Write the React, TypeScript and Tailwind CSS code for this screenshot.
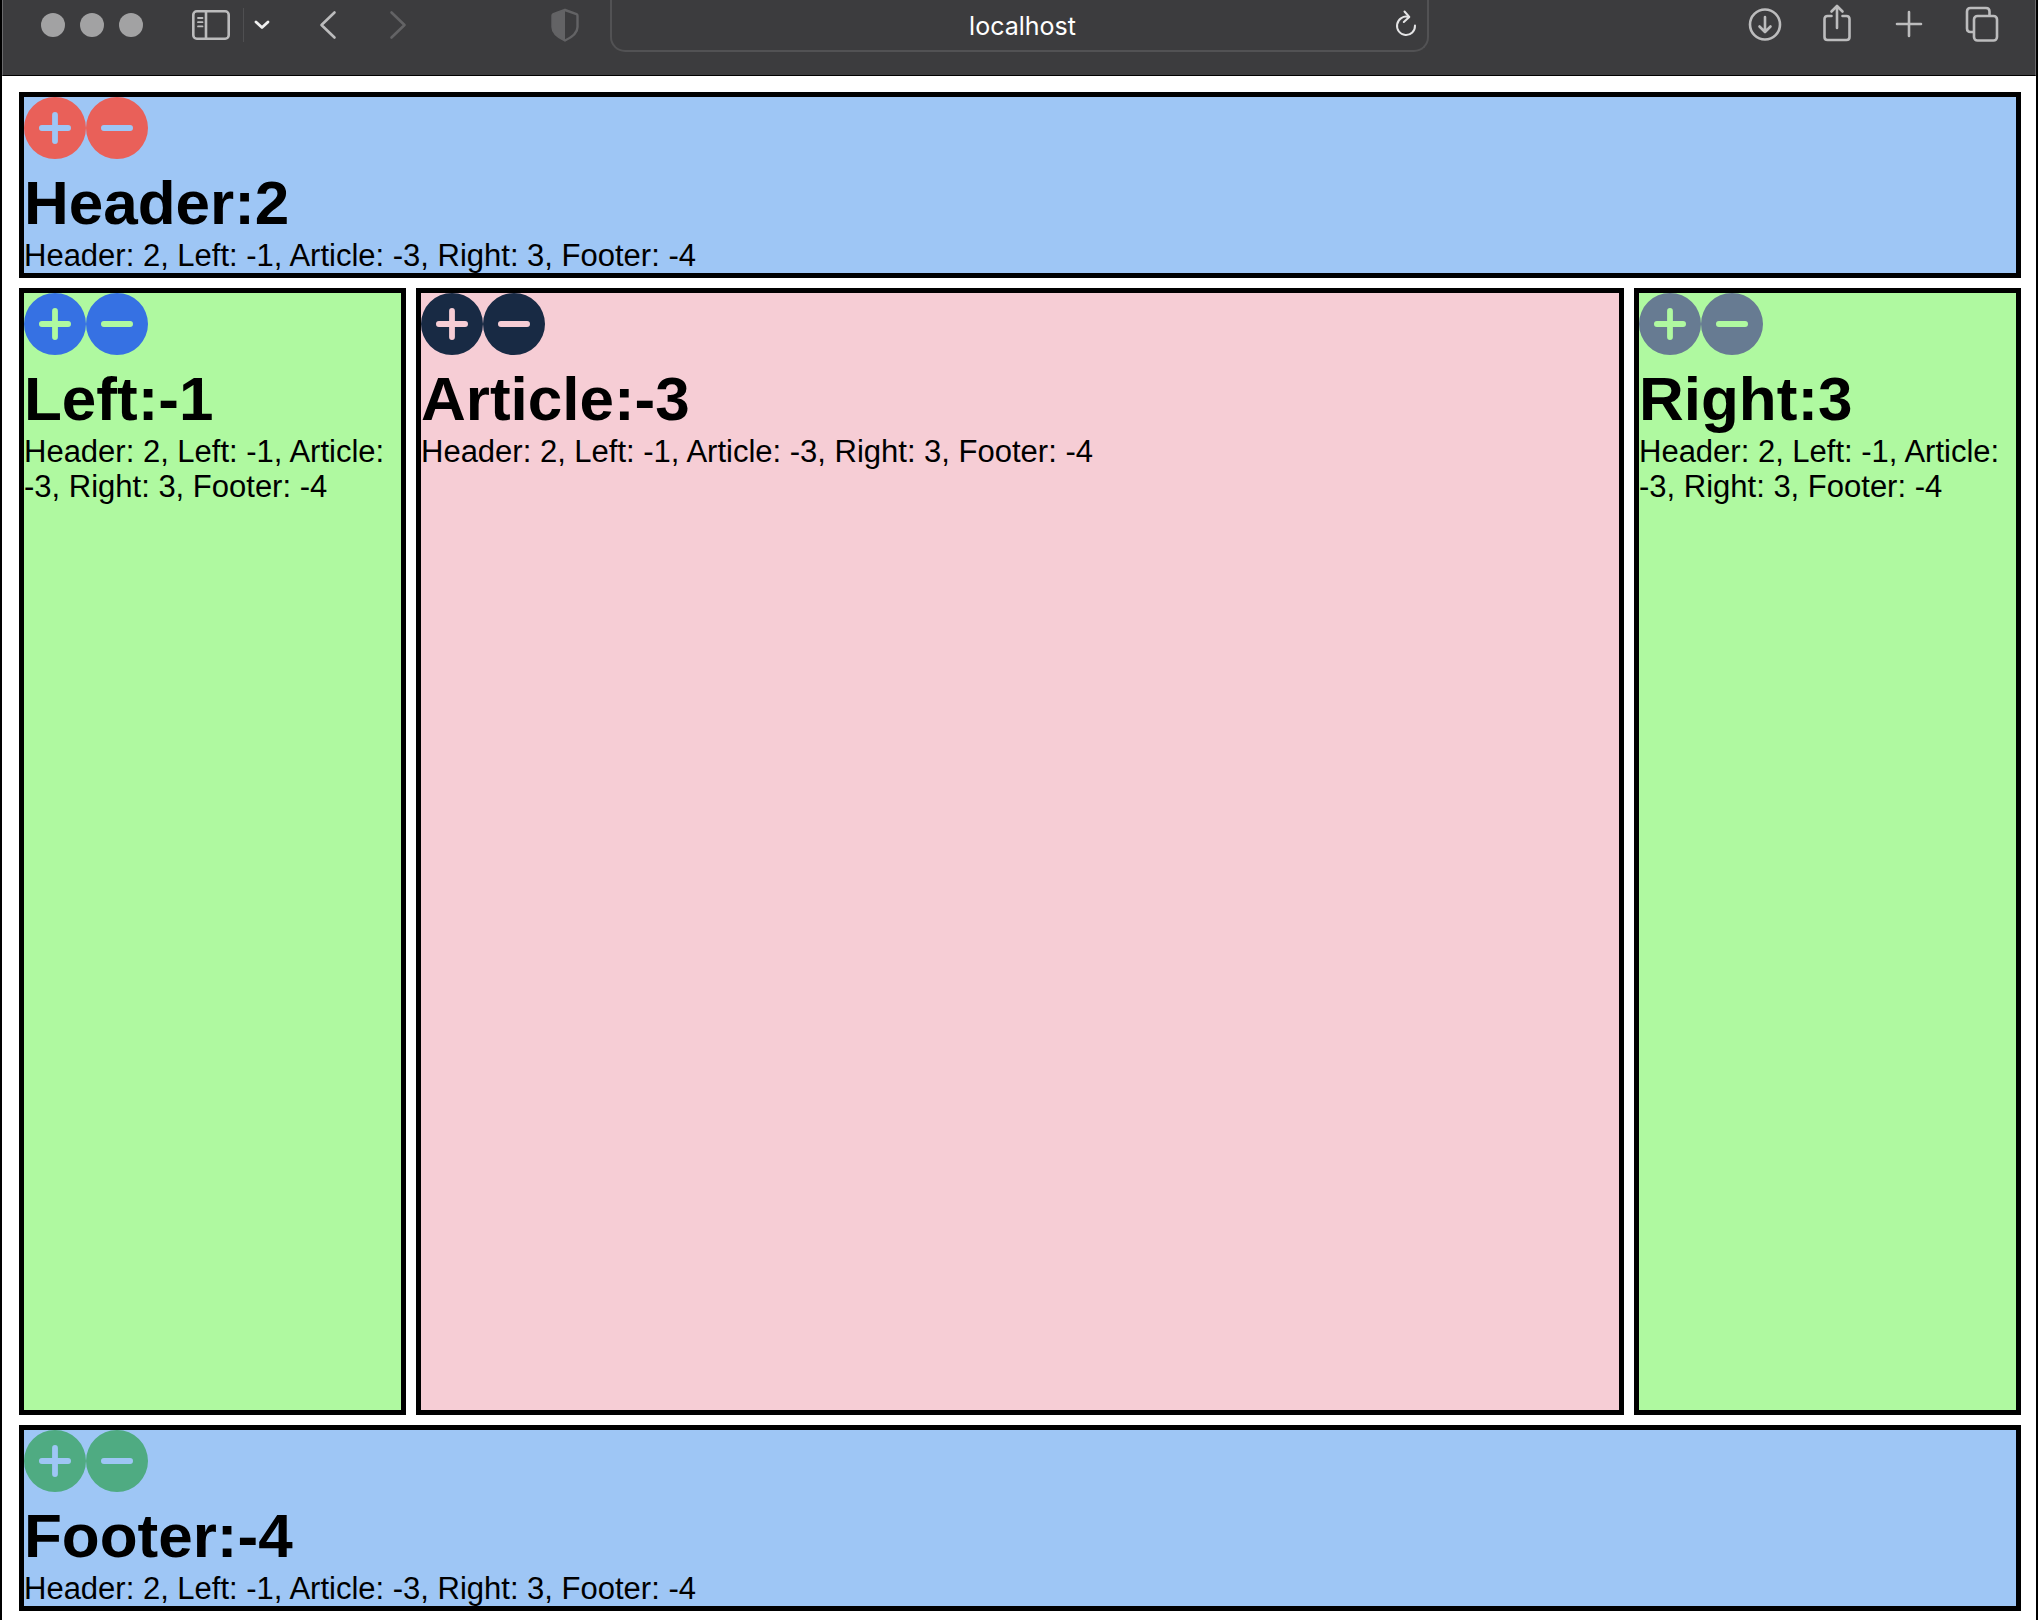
import React, { useState } from "react";

const iconProps = {
  fill: "none",
  stroke: "currentColor",
  strokeLinecap: "round" as const,
  strokeLinejoin: "round" as const,
};

function Toolbar() {
  return (
    <div className="flex h-[76px] shrink-0 items-start border-x border-b border-x-[#6a6a6c] border-b-black bg-[#3c3c3e] text-[#bcbcbd]">
      <div className="flex w-[607px] shrink-0 items-center">
        <div className="ml-[38px] flex h-[50px] items-center gap-[15px]">
          <button aria-label="Close window" className="size-6 rounded-full bg-[#a2a2a3]" />
          <button aria-label="Minimise window" className="size-6 rounded-full bg-[#a2a2a3]" />
          <button aria-label="Zoom window" className="size-6 rounded-full bg-[#a2a2a3]" />
        </div>
        <button aria-label="Show sidebar" className="ml-12">
          <svg width="40" height="32" viewBox="0 0 40 32" {...iconProps} strokeWidth="2.6">
            <rect x="2.3" y="2.3" width="35.4" height="27.4" rx="3.5" />
            <path d="M15 2.5v27" />
            <path d="M7 9h4.500M7 13.200h4.500M7 17.400h4.500" strokeWidth="1.8" />
          </svg>
        </button>
        <span className="ml-3 h-[34px] w-px bg-[#4f4f51]" />
        <button aria-label="Tab groups" className="ml-[10px] text-[#f0f0f0]">
          <svg width="16" height="10" viewBox="0 0 16 10" {...iconProps} strokeWidth="2.8">
            <path d="M2 2l6 5.500L14 2" />
          </svg>
        </button>
        <button aria-label="Back" className="ml-12">
          <svg width="20" height="30" viewBox="0 0 20 30" {...iconProps} strokeWidth="2.6">
            <path d="M16.500 2.500L3.500 15l13 12.500" />
          </svg>
        </button>
        <button aria-label="Forward" className="ml-[50px] text-[#636365]">
          <svg width="20" height="30" viewBox="0 0 20 30" {...iconProps} strokeWidth="2.6">
            <path d="M3.500 2.500l13 12.500-13 12.500" />
          </svg>
        </button>
        <button aria-label="Privacy report" className="ml-[143px] text-[#636365]">
          <svg width="28" height="34" viewBox="0 0 28 34" {...iconProps} strokeWidth="2.4">
            <path d="M14 2l11.500 4.200c.7.300 1 .8 1 1.500v11.300c0 6-4.500 9.800-12.500 13.500C6 28.800 1.500 25 1.500 19V7.700c0-.7.300-1.200 1-1.500z" />
            <path d="M14 2v30.500C6 28.800 1.500 25 1.500 19V7.700c0-.7.300-1.200 1-1.500z" fill="currentColor" stroke="none" />
          </svg>
        </button>
      </div>
      <label className="flex h-[52px] min-w-0 flex-1 items-center rounded-b-[15px] border-2 border-t-0 border-[#525254] pr-[10px] pl-[38px]">
        <input
          aria-label="Address"
          defaultValue="localhost"
          className="min-w-0 flex-1 bg-transparent pt-[2px] text-center text-[25px] leading-8 text-white outline-none"
          style={{ fontFamily: 'Inter, "Liberation Sans", sans-serif' }}
        />
        <button aria-label="Reload" className="text-[#e4e4e5]">
          <svg width="22" height="30" viewBox="0 0 22 30" {...iconProps} strokeWidth="2">
            <path d="M20 15.500A9 9.200 0 1 1 13.500 7" />
            <path d="M9.500 1.500l4.800 5.500-5.500 5" />
          </svg>
        </button>
      </label>
      <div className="flex h-12 w-[606px] shrink-0 items-center justify-end pr-[35px]">
        <button aria-label="Downloads">
          <svg width="34" height="36" viewBox="0 0 34 36" {...iconProps} strokeWidth="2.6">
            <circle cx="17" cy="18.500" r="15" />
            <path d="M17 11v14.500M11.500 20.500l5.500 5.500 5.500-5.500" />
          </svg>
        </button>
        <button aria-label="Share" className="ml-10">
          <svg width="30" height="42" viewBox="0 0 30 42" {...iconProps} strokeWidth="2.600">
            <path d="M9.500 13H5.500c-1.800 0-3 1-3 3v18c0 2 1.200 3 3 3h19c1.800 0 3-1 3-3v-18c0-2-1.200-3-3-3h-4" />
            <path d="M15 25V3.500M9.500 8.500L15 3l5.500 5.500" />
          </svg>
        </button>
        <button aria-label="New tab" className="ml-[43px]">
          <svg width="28" height="28" viewBox="0 0 28 28" {...iconProps} strokeWidth="2.600">
            <path d="M14 2v24M2 14h24" />
          </svg>
        </button>
        <button aria-label="Show all tabs" className="ml-[41px]">
          <svg width="36" height="38" viewBox="0 0 36 38" {...iconProps} strokeWidth="2.600">
            <rect x="10" y="11" width="23" height="24.500" rx="3.500" />
            <path d="M9.500 27H6.500c-2.300 0-3.500-1.200-3.500-3.500V6.500c0-2.300 1.200-3.500 3.500-3.500H22c2.300 0 3.500 1.200 3.500 3.500v4" />
          </svg>
        </button>
      </div>
    </div>
  );
}

type Name = "Header" | "Left" | "Article" | "Right" | "Footer";
type Counts = Record<Name, number>;

interface PanelProps {
  as: "header" | "aside" | "article" | "footer";
  name: Name;
  counts: Counts;
  change: (name: Name, by: number) => void;
  className: string;
  iconClass: string;
}

function Panel({ as: Tag, name, counts, change, className, iconClass }: PanelProps) {
  const summary = (Object.keys(counts) as Name[]).map((k) => `${k}: ${counts[k]}`).join(", ");
  return (
    <Tag className={`border-5 border-black ${className}`}>
      <div className={`mb-2 flex ${iconClass}`}>
        <button aria-label={`Increase ${name}`} onClick={() => change(name, 1)}>
          <svg width="62" height="62" viewBox="0 0 62 62">
            <path
              fill="currentColor"
              fillRule="evenodd"
              d="M31 0a31 31 0 1 1 0 62a31 31 0 1 1 0-62zM31 15a2.900 2.900 0 0 0-2.900 2.900V28.100H17.900a2.900 2.900 0 0 0 0 5.800H28.100V44.100a2.900 2.900 0 0 0 5.800 0V33.900H44.100a2.900 2.900 0 0 0 0-5.800H33.900V17.900A2.900 2.900 0 0 0 31 15z"
            />
          </svg>
        </button>
        <button aria-label={`Decrease ${name}`} onClick={() => change(name, -1)}>
          <svg width="62" height="62" viewBox="0 0 62 62">
            <path
              fill="currentColor"
              fillRule="evenodd"
              d="M31 0a31 31 0 1 1 0 62a31 31 0 1 1 0-62zM17.900 28.100a2.900 2.900 0 0 0 0 5.800H44.100a2.900 2.900 0 0 0 0-5.800z"
            />
          </svg>
        </button>
      </div>
      <h1 className="text-[62px] leading-[71px] font-bold">{`${name}:${counts[name]}`}</h1>
      <p className="text-[31px] leading-[35px]">{summary}</p>
    </Tag>
  );
}

export default function App() {
  const [counts, setCounts] = useState<Counts>({ Header: 2, Left: -1, Article: -3, Right: 3, Footer: -4 });
  const change = (name: Name, by: number) => setCounts((c) => ({ ...c, [name]: c[name] + by }));
  const shared = { counts, change };

  return (
    <div
      className="flex min-h-screen flex-col border-x-2 border-black bg-white text-black"
      style={{ fontFamily: '"Liberation Sans", Arial, sans-serif' }}
    >
      <Toolbar />
      <main className="flex flex-1 flex-col gap-[10px] pt-4 pr-[15px] pb-[9px] pl-[17px]">
        <Panel as="header" name="Header" {...shared} className="bg-[#9ec6f5]" iconClass="text-[#e96059]" />
        <div className="grid flex-1 grid-cols-[387px_1fr_387px] gap-[10px]">
          <Panel as="aside" name="Left" {...shared} className="bg-[#aff9a0]" iconClass="text-[#3671e3]" />
          <Panel as="article" name="Article" {...shared} className="bg-[#f6cdd5]" iconClass="text-[#182a44]" />
          <Panel as="aside" name="Right" {...shared} className="bg-[#aff9a0]" iconClass="text-[#677b92]" />
        </div>
        <Panel as="footer" name="Footer" {...shared} className="bg-[#9ec6f5]" iconClass="text-[#4fab82]" />
      </main>
    </div>
  );
}
